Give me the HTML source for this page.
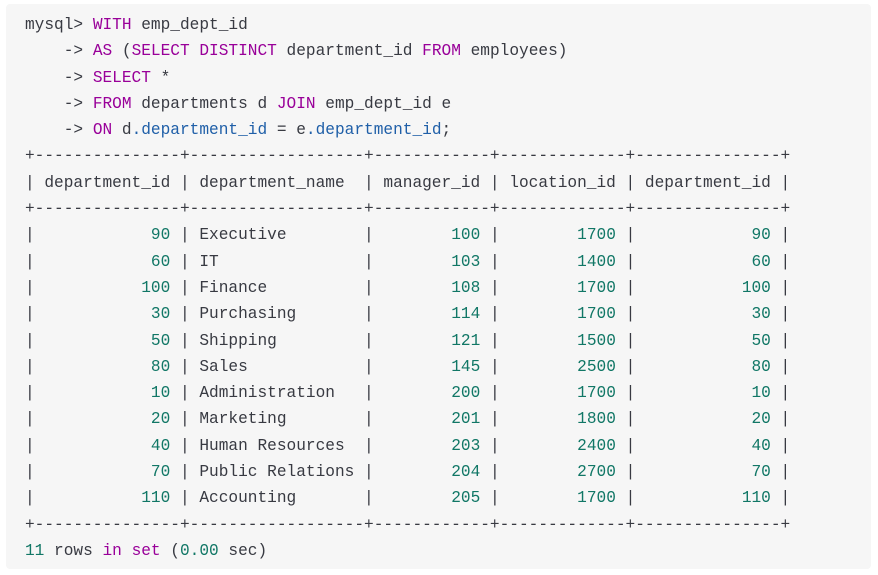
<!DOCTYPE html>
<html><head><style>
html,body{margin:0;padding:0;background:#fff;width:878px;height:575px;overflow:hidden}
.box{position:absolute;left:6px;top:4px;width:865px;height:565px;background:#f6f6f6;border-radius:4px}
pre{position:absolute;left:25px;top:12px;margin:0;font-family:"Liberation Mono",monospace;font-size:16.15px;line-height:26.3px;color:#383a42}
.k{color:#990099}.n{color:#117766}.p{color:#1f5fa8}
</style></head><body><div class="box"></div>
<pre>mysql&gt; <span class="k">WITH</span> emp_dept_id
    -&gt; <span class="k">AS</span> (<span class="k">SELECT</span> <span class="k">DISTINCT</span> department_id <span class="k">FROM</span> employees)
    -&gt; <span class="k">SELECT</span> *
    -&gt; <span class="k">FROM</span> departments d <span class="k">JOIN</span> emp_dept_id e
    -&gt; <span class="k">ON</span> d<span class="p">.department_id</span> = e<span class="p">.department_id</span>;
+---------------+------------------+------------+-------------+---------------+
| department_id | department_name  | manager_id | location_id | department_id |
+---------------+------------------+------------+-------------+---------------+
|            <span class="n">90</span> | Executive        |        <span class="n">100</span> |        <span class="n">1700</span> |            <span class="n">90</span> |
|            <span class="n">60</span> | IT               |        <span class="n">103</span> |        <span class="n">1400</span> |            <span class="n">60</span> |
|           <span class="n">100</span> | Finance          |        <span class="n">108</span> |        <span class="n">1700</span> |           <span class="n">100</span> |
|            <span class="n">30</span> | Purchasing       |        <span class="n">114</span> |        <span class="n">1700</span> |            <span class="n">30</span> |
|            <span class="n">50</span> | Shipping         |        <span class="n">121</span> |        <span class="n">1500</span> |            <span class="n">50</span> |
|            <span class="n">80</span> | Sales            |        <span class="n">145</span> |        <span class="n">2500</span> |            <span class="n">80</span> |
|            <span class="n">10</span> | Administration   |        <span class="n">200</span> |        <span class="n">1700</span> |            <span class="n">10</span> |
|            <span class="n">20</span> | Marketing        |        <span class="n">201</span> |        <span class="n">1800</span> |            <span class="n">20</span> |
|            <span class="n">40</span> | Human Resources  |        <span class="n">203</span> |        <span class="n">2400</span> |            <span class="n">40</span> |
|            <span class="n">70</span> | Public Relations |        <span class="n">204</span> |        <span class="n">2700</span> |            <span class="n">70</span> |
|           <span class="n">110</span> | Accounting       |        <span class="n">205</span> |        <span class="n">1700</span> |           <span class="n">110</span> |
+---------------+------------------+------------+-------------+---------------+
<span class="n">11</span> rows <span class="k">in</span> <span class="k">set</span> (<span class="n">0.00</span> sec)</pre>
</body></html>
